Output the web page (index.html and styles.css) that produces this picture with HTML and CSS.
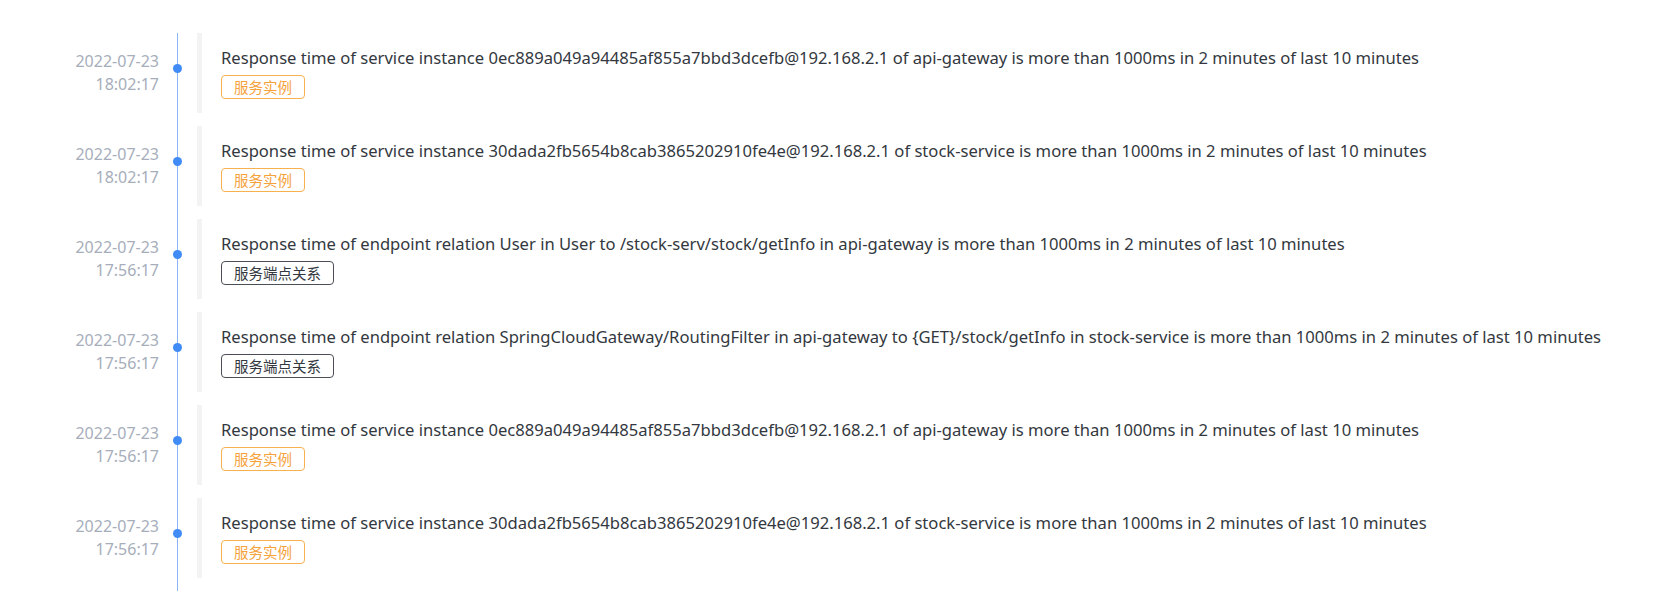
FILE: index.html
```html
<!DOCTYPE html>
<html>
<head>
<meta charset="utf-8">
<link rel="stylesheet" href="styles.css">
</head>
<body>
<div class="timeline">
  <div class="row">
    <div class="time"><div>2022-07-23</div><div>18:02:17</div></div>
    <div class="axis"><span class="dot"></span></div>
    <div class="card">
      <div class="title">Response time of service instance 0ec889a049a94485af855a7bbd3dcefb@192.168.2.1 of api-gateway is more than 1000ms in 2 minutes of last 10 minutes</div>
      <span class="tag tag-orange">服务实例</span>
    </div>
  </div>
  <div class="row">
    <div class="time"><div>2022-07-23</div><div>18:02:17</div></div>
    <div class="axis"><span class="dot"></span></div>
    <div class="card">
      <div class="title">Response time of service instance 30dada2fb5654b8cab3865202910fe4e@192.168.2.1 of stock-service is more than 1000ms in 2 minutes of last 10 minutes</div>
      <span class="tag tag-orange">服务实例</span>
    </div>
  </div>
  <div class="row">
    <div class="time"><div>2022-07-23</div><div>17:56:17</div></div>
    <div class="axis"><span class="dot"></span></div>
    <div class="card">
      <div class="title">Response time of endpoint relation User in User to /stock-serv/stock/getInfo in api-gateway is more than 1000ms in 2 minutes of last 10 minutes</div>
      <span class="tag tag-dark">服务端点关系</span>
    </div>
  </div>
  <div class="row">
    <div class="time"><div>2022-07-23</div><div>17:56:17</div></div>
    <div class="axis"><span class="dot"></span></div>
    <div class="card">
      <div class="title">Response time of endpoint relation SpringCloudGateway/RoutingFilter in api-gateway to {GET}/stock/getInfo in stock-service is more than 1000ms in 2 minutes of last 10 minutes</div>
      <span class="tag tag-dark">服务端点关系</span>
    </div>
  </div>
  <div class="row">
    <div class="time"><div>2022-07-23</div><div>17:56:17</div></div>
    <div class="axis"><span class="dot"></span></div>
    <div class="card">
      <div class="title">Response time of service instance 0ec889a049a94485af855a7bbd3dcefb@192.168.2.1 of api-gateway is more than 1000ms in 2 minutes of last 10 minutes</div>
      <span class="tag tag-orange">服务实例</span>
    </div>
  </div>
  <div class="row">
    <div class="time"><div>2022-07-23</div><div>17:56:17</div></div>
    <div class="axis"><span class="dot"></span></div>
    <div class="card">
      <div class="title">Response time of service instance 30dada2fb5654b8cab3865202910fe4e@192.168.2.1 of stock-service is more than 1000ms in 2 minutes of last 10 minutes</div>
      <span class="tag tag-orange">服务实例</span>
    </div>
  </div>
</div>
</body>
</html>
```
FILE: styles.css
```css
html, body {
  margin: 0;
  padding: 0;
  background: #ffffff;
}
body {
  font-family: "Noto Sans", "Noto Sans CJK SC", sans-serif;
  color: #333840;
}
.timeline {
  padding-top: 33px;
  padding-bottom: 18px;
}
.row {
  display: flex;
  align-items: stretch;
}
.time {
  width: 159px;
  flex: none;
  text-align: right;
  color: #a7aebb;
  font-size: 16px;
  line-height: 23px;
  align-self: center;
  margin-bottom: 13px;
}
.axis {
  position: relative;
  width: 38px;
  flex: none;
}
.axis::before {
  content: "";
  position: absolute;
  left: 18px;
  top: 0;
  bottom: 0;
  width: 1px;
  background: #8ab4f8;
}
.dot {
  position: absolute;
  left: 14px;
  top: 31px;
  width: 9px;
  height: 9px;
  border-radius: 50%;
  background: #418bf7;
}
.card {
  flex: 1;
  border-left: 5px solid #f3f3f3;
  padding: 13px 0 13px 19px;
  height: 54px;
  margin-bottom: 13px;
}
.title {
  font-size: 16.6px;
  line-height: 24px;
  white-space: nowrap;
}
.tag {
  display: inline-block;
  margin-top: 5px;
  font-size: 14.5px;
  line-height: 22px;
  padding: 0 12px;
  border-radius: 4px;
  border: 1px solid;
}
.tag-orange {
  color: #f5a23c;
  border-color: #f7b14f;
}
.tag-dark {
  color: #333840;
  border-color: #4a4f57;
}
```
